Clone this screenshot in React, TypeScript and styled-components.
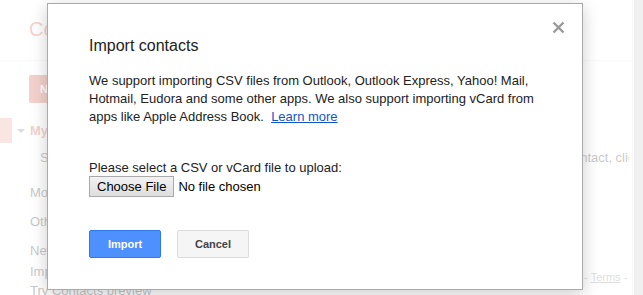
import React from "react";
import styled, { createGlobalStyle } from "styled-components";

const GlobalStyle = createGlobalStyle`
  html, body { margin: 0; padding: 0; background: #fff; }
  body {
    font-family: "Liberation Sans", Arial, sans-serif;
    font-size: 13px;
    color: #222;
    overflow: hidden;
  }
  * { box-sizing: border-box; }
`;

const Page = styled.div`
  position: relative;
  width: 643px;
  height: 295px;
  display: flex;
  overflow: hidden;
`;

const Main = styled.div`
  flex: 1;
  min-width: 0;
  display: flex;
  flex-direction: column;
  overflow: hidden;
`;

const Header = styled.div`
  height: 61px;
  flex-shrink: 0;
  display: flex;
  align-items: center;
  padding-left: 29px;
  border-bottom: 1px solid #e5e5e5;
`;

const AppTitle = styled.div`
  font-size: 20px;
  color: #dd4b39;
  margin-top: -2px;
`;

const Body = styled.div`
  flex: 1;
  display: flex;
  min-height: 0;
  overflow: hidden;
`;

const Sidebar = styled.div`
  width: 190px;
  flex-shrink: 0;
  display: flex;
  flex-direction: column;
  padding-top: 14px;
  & > * { flex-shrink: 0; }
`;

const NewButton = styled.div`
  margin-left: 29px;
  width: 72px;
  height: 28px;
  background: #d14836;
  border-radius: 2px;
  color: #fff;
  font-weight: bold;
  font-size: 11px;
  display: flex;
  align-items: center;
  padding-left: 11px;
`;

const SelectedRow = styled.div`
  margin-top: 15px;
  height: 25px;
  display: flex;
  align-items: center;
`;

const SelectedBar = styled.div`
  width: 12px;
  align-self: stretch;
  background: #d14836;
  margin-right: 5px;
  opacity: 0.55;
`;

const Caret = styled.span`
  width: 0;
  height: 0;
  border-left: 4px solid transparent;
  border-right: 4px solid transparent;
  border-top: 4px solid #777;
  margin-right: 5px;
`;

const SelectedLabel = styled.span`
  font-weight: bold;
  color: #d14836;
  font-size: 13px;
`;

const NavItem = styled.div<{ $mt: number; $indent?: number }>`
  margin-top: ${(p) => p.$mt}px;
  padding-left: ${(p) => p.$indent ?? 30}px;
  height: 20px;
  line-height: 20px;
  font-size: 13px;
  color: #222;
  white-space: nowrap;
`;

const Content = styled.div`
  flex: 1;
  min-width: 0;
  margin-right: 3px;
  overflow: hidden;
  display: flex;
  flex-direction: column;
  & > * { flex-shrink: 0; }
`;

const EmptyText = styled.div`
  margin-top: 87px;
  padding-left: 323px;
  white-space: nowrap;
  height: 20px;
  line-height: 20px;
  font-size: 13px;
  color: #222;
`;

const Footer = styled.div`
  margin-top: 99px;
  padding-left: 355px;
  white-space: nowrap;
  font-size: 11px;
  color: #777;
  line-height: 20px;
`;

const FooterLink = styled.span`
  text-decoration: underline;
`;

const ScrollTrack = styled.div`
  width: 11px;
  flex-shrink: 0;
  border-left: 1px solid #e0e0e0;
  padding-left: 1px;
  background: #fff;
  display: flex;
`;

const ScrollThumb = styled.div`
  flex: 1;
  background: #c1c1c1;
  border-left: 1px solid #b3b3b3;
`;

const Veil = styled.div`
  position: absolute;
  inset: 0;
  background: rgba(255, 255, 255, 0.75);
`;

const Dialog = styled.div`
  position: absolute;
  left: 47px;
  top: 3px;
  width: 536px;
  height: 287px;
  background: #fff;
  border: 1px solid rgba(0, 0, 0, 0.333);
  box-shadow: 0 4px 16px rgba(0, 0, 0, 0.2);
  padding: 30px 41px;
  color: #222;
`;

const CloseButton = styled.div`
  position: absolute;
  top: 16px;
  right: 17px;
  width: 14px;
  height: 14px;
  display: flex;
  align-items: center;
  justify-content: center;
`;

const DialogTitle = styled.div`
  font-size: 16px;
  line-height: 24px;
  color: #222;
`;

const DialogText = styled.p`
  margin: 14px 0 0;
  font-size: 13px;
  line-height: 18px;
  color: #222;
`;

const Link = styled.a`
  color: #15c;
  text-decoration: underline;
  cursor: pointer;
`;

const FieldLabel = styled.div`
  margin-top: 33px;
  font-size: 13px;
  line-height: 17px;
`;

const FileRow = styled.div`
  display: flex;
  align-items: center;
  gap: 4px;
`;

const FileButton = styled.button`
  height: 21px;
  padding: 0 7px;
  font-family: "Liberation Sans", Arial, sans-serif;
  font-size: 13px;
  color: #000;
  background: linear-gradient(#f2f2f2, #dedede);
  border: 1px solid #a9a9a9;
  border-radius: 0;
`;

const FileStatus = styled.span`
  font-size: 13px;
  color: #000;
`;

const Actions = styled.div`
  display: flex;
  gap: 16px;
  margin-top: 33px;
`;

const ActionButton = styled.button<{ $primary?: boolean }>`
  min-width: 72px;
  height: 28px;
  padding: 0 8px;
  font-family: "Liberation Sans", Arial, sans-serif;
  font-size: 11px;
  font-weight: bold;
  border-radius: 2px;
  border: 1px solid ${(p) => (p.$primary ? "#3079ed" : "rgba(0,0,0,0.1)")};
  background: ${(p) => (p.$primary ? "#4d90fe" : "#f5f5f5")};
  color: ${(p) => (p.$primary ? "#fff" : "#444")};
`;

export default function App() {
  return (
    <>
      <GlobalStyle />
      <Page>
        <Main>
          <Header>
            <AppTitle>Contacts</AppTitle>
          </Header>
          <Body>
            <Sidebar>
              <NewButton>NEW</NewButton>
              <SelectedRow>
                <SelectedBar />
                <Caret />
                <SelectedLabel>My Contacts</SelectedLabel>
              </SelectedRow>
              <NavItem $mt={5} $indent={40}>Starred</NavItem>
              <NavItem $mt={15}>Most Contacted</NavItem>
              <NavItem $mt={9}>Other Contacts</NavItem>
              <NavItem $mt={9}>New Group...</NavItem>
              <NavItem $mt={1}>Import Contacts...</NavItem>
              <NavItem $mt={-1}>Try Contacts preview</NavItem>
            </Sidebar>
            <Content>
              <EmptyText>To add a contact, click "New contact" above.</EmptyText>
              <Footer>
                Privacy - <FooterLink>Terms</FooterLink> - Help
              </Footer>
            </Content>
          </Body>
        </Main>
        <ScrollTrack>
          <ScrollThumb />
        </ScrollTrack>
        <Veil />
        <Dialog role="dialog" aria-label="Import contacts">
          <CloseButton aria-label="Close">
            <svg width="13" height="13" viewBox="0 0 13 13">
              <path d="M1.5 1.5 L11.5 11.5 M11.5 1.5 L1.5 11.5" stroke="#999" strokeWidth="2.4" />
            </svg>
          </CloseButton>
          <DialogTitle>Import contacts</DialogTitle>
          <DialogText>
            We support importing CSV files from Outlook, Outlook Express, Yahoo! Mail,
            Hotmail, Eudora and some other apps. We also support importing vCard from
            apps like Apple Address Book.&nbsp; <Link>Learn more</Link>
          </DialogText>
          <FieldLabel>Please select a CSV or vCard file to upload:</FieldLabel>
          <FileRow>
            <FileButton>Choose File</FileButton>
            <FileStatus>No file chosen</FileStatus>
          </FileRow>
          <Actions>
            <ActionButton $primary>Import</ActionButton>
            <ActionButton>Cancel</ActionButton>
          </Actions>
        </Dialog>
      </Page>
    </>
  );
}
